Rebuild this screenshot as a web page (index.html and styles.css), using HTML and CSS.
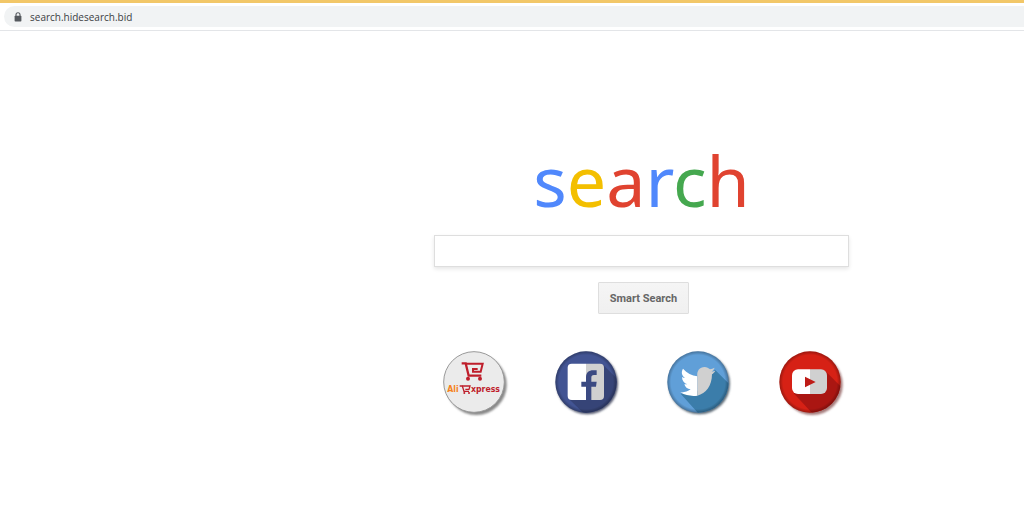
FILE: index.html
```html
<!DOCTYPE html>
<html lang="en">
<head>
  <meta charset="UTF-8">
  <title>search</title>
  <link rel="stylesheet" href="styles.css">
</head>
<body>

<header class="toolbar">
  <div class="address">
    <svg class="lock" viewBox="0 0 8 10" aria-hidden="true">
      <path d="M2 4.5V2.8a2 2 0 0 1 4 0v1.7" fill="none" stroke="#55595e" stroke-width="1.1"/>
      <rect x="0.6" y="3.8" width="6.8" height="5.6" rx="0.7" fill="#55595e"/>
    </svg>
    <span>search.hidesearch.bid</span>
  </div>
</header>

<main class="page">
  <h1 class="logo"><span class="blue">s</span><span class="yellow">e</span><span class="red">a</span><span class="blue">r</span><span class="green">c</span><span class="red">h</span></h1>

  <form class="search-form">
    <input class="search-box" type="text" name="q" aria-label="Search">
    <button class="search-button" type="submit">Smart Search</button>
  </form>

  <nav class="links">
    <a href="#" aria-label="AliExpress">
      <svg class="icon" viewBox="15 18 204 204">
        <defs>
          <filter id="soft" x="-20%" y="-20%" width="140%" height="140%"><feGaussianBlur stdDeviation="3"/></filter>
          <radialGradient id="rim">
            <stop offset="0.88" stop-color="#000" stop-opacity="0"/>
            <stop offset="1" stop-color="#000" stop-opacity="0.28"/>
          </radialGradient>
          <clipPath id="disc"><circle cx="117" cy="117" r="92"/></clipPath>
        </defs>
        <circle cx="124" cy="125" r="91" fill="#888" filter="url(#soft)"/>
        <circle cx="117" cy="117" r="91" fill="#ebebeb" stroke="#999" stroke-width="3"/>
        <g fill="none" stroke="#bf1e2b" stroke-width="7">
          <path d="M80 61h12l9 37h38"/>
          <path d="M92 62h51l-6 24h-23v-8h14" stroke-width="6"/>
        </g>
        <circle cx="99" cy="107" r="6" fill="#bf1e2b"/>
        <circle cx="135" cy="107" r="6" fill="#bf1e2b"/>
        <text class="ali orange" x="37" y="147">Ali</text>
        <g fill="none" stroke="#bf1e2b" stroke-width="4">
          <path d="M74 129h8l5 16h15"/>
          <path d="M82 129h23l-3 10H91"/>
        </g>
        <circle cx="88" cy="150" r="3" fill="#bf1e2b"/>
        <circle cx="102" cy="150" r="3" fill="#bf1e2b"/>
        <text class="ali crimson" x="108" y="147">xpress</text>
      </svg>
    </a>
    <a href="#" aria-label="Facebook">
      <svg class="icon" viewBox="15 18 204 204">
        <circle cx="121" cy="122" r="92" fill="#555a70" filter="url(#soft)"/>
        <circle cx="117" cy="117" r="92" fill="#425493"/>
        <path d="M168 65l60 60v103H128l-63-61z" fill="#364477" clip-path="url(#disc)"/>
        <circle cx="117" cy="117" r="92" fill="url(#rim)"/>
        <path d="M117 62H74a12 12 0 0 0-12 12v85a12 12 0 0 0 12 12h43z" fill="#fff"/>
        <path d="M117 62h42a12 12 0 0 1 12 12v85a12 12 0 0 1-12 12h-42z" fill="#d0d0d0"/>
        <path d="M117 171v-40h-14v-15h14v-12c0-15 8-22 22-22h10v14h-8c-6 0-8 3-8 8v12h16l-2 15h-14v40z" fill="#3b4a82"/>
      </svg>
    </a>
    <a href="#" aria-label="Twitter">
      <svg class="icon" viewBox="15 18 204 204">
        <circle cx="121" cy="122" r="92" fill="#596874" filter="url(#soft)"/>
        <circle cx="117" cy="117" r="92" fill="#609fd8"/>
        <path d="M168 80l60 60v88h-95l-68-76 50-8z" fill="#3b7daa" clip-path="url(#disc)"/>
        <circle cx="117" cy="117" r="92" fill="url(#rim)"/>
        <path d="M64 148c12 1 22-2 31-9-10-1-17-7-19-15h9c-10-4-16-11-16-22 3 2 6 3 9 3-10-8-12-18-6-28 12 14 26 21 43 23v58c-17 2-35 0-51-10z" fill="#fff"/>
        <path d="M115 100c-2-17 7-28 22-28 6 0 12 3 16 7 5-1 9-3 14-5-2 5-5 9-9 12 4-1 8-2 11-3-3 5-6 8-10 11 0 34-18 58-44 64z" fill="#d0d0d0"/>
      </svg>
    </a>
    <a href="#" aria-label="YouTube">
      <svg class="icon" viewBox="15 18 204 204">
        <circle cx="124" cy="125" r="91" fill="#a57c7c" filter="url(#soft)"/>
        <circle cx="117" cy="117" r="92" fill="#d62115"/>
        <path d="M163 84l65 65v79h-88l-72-77z" fill="#aa1612" clip-path="url(#disc)"/>
        <circle cx="117" cy="117" r="92" fill="url(#rim)"/>
        <path d="M117 79H81a18 18 0 0 0-18 18v38a18 18 0 0 0 18 18h36z" fill="#fff"/>
        <path d="M117 79h33a18 18 0 0 1 18 18v38a18 18 0 0 1-18 18h-33z" fill="#d0d0d0"/>
        <path d="M102 101l32 16-32 16z" fill="#be1b17"/>
      </svg>
    </a>
  </nav>
</main>

</body>
</html>
```

FILE: styles.css
```css
body {
  margin: 0;
  background: #fff;
  font-family: "Liberation Sans", Arial, sans-serif;
}

/* address bar */
.toolbar {
  padding: 3px 0 3px 4px;
  border-top: 3px solid #f2c768;
  border-bottom: 1px solid #e3e5e8;
}

.address {
  display: flex;
  align-items: center;
  gap: 8px;
  height: 21px;
  padding-left: 10px;
  border-radius: 11px 0 0 11px;
  background: #f1f3f4;
  color: #3c4043;
  font: 10px/20px "Open Sans", "Noto Sans", sans-serif;
}

.lock {
  width: 8px;
  height: 10px;
}

/* start page */
.page {
  display: flex;
  flex-direction: column;
  align-items: center;
  padding: 101px 0 0 259px;
}

.logo {
  margin: 0 0 7px;
  font: 400 70px/96px "Noto Sans", "Open Sans", sans-serif;
}

.blue { color: #5088fc; }
.yellow { color: #f3bf00; }
.red { color: #e04330; }
.green { color: #45a84f; }

.search-form {
  display: flex;
  flex-direction: column;
  align-items: center;
  gap: 15px;
}

.search-box {
  box-sizing: border-box;
  width: 415px;
  height: 32px;
  padding: 0 8px;
  border: 1px solid #dedede;
  background: #fff;
  font-size: 14px;
  box-shadow: 0 2px 4px rgba(0, 0, 0, 0.1);
}

.search-button {
  height: 32px;
  margin-left: 4px;
  padding: 0 11px;
  border: 1px solid #dedede;
  border-radius: 1px;
  background: linear-gradient(#f5f5f5, #f0f0f0);
  color: #666;
  font: bold 11px Roboto, "Liberation Sans", sans-serif;
}

.links {
  display: flex;
  gap: 44px;
  margin-top: 35px;
}

.icon {
  display: block;
  width: 68px;
  height: 68px;
  overflow: visible;
}

.ali {
  font: bold 26px "DejaVu Sans Condensed", "DejaVu Sans", sans-serif;
}

.orange { fill: #f58220; }
.crimson { fill: #bf1e2b; }
```
